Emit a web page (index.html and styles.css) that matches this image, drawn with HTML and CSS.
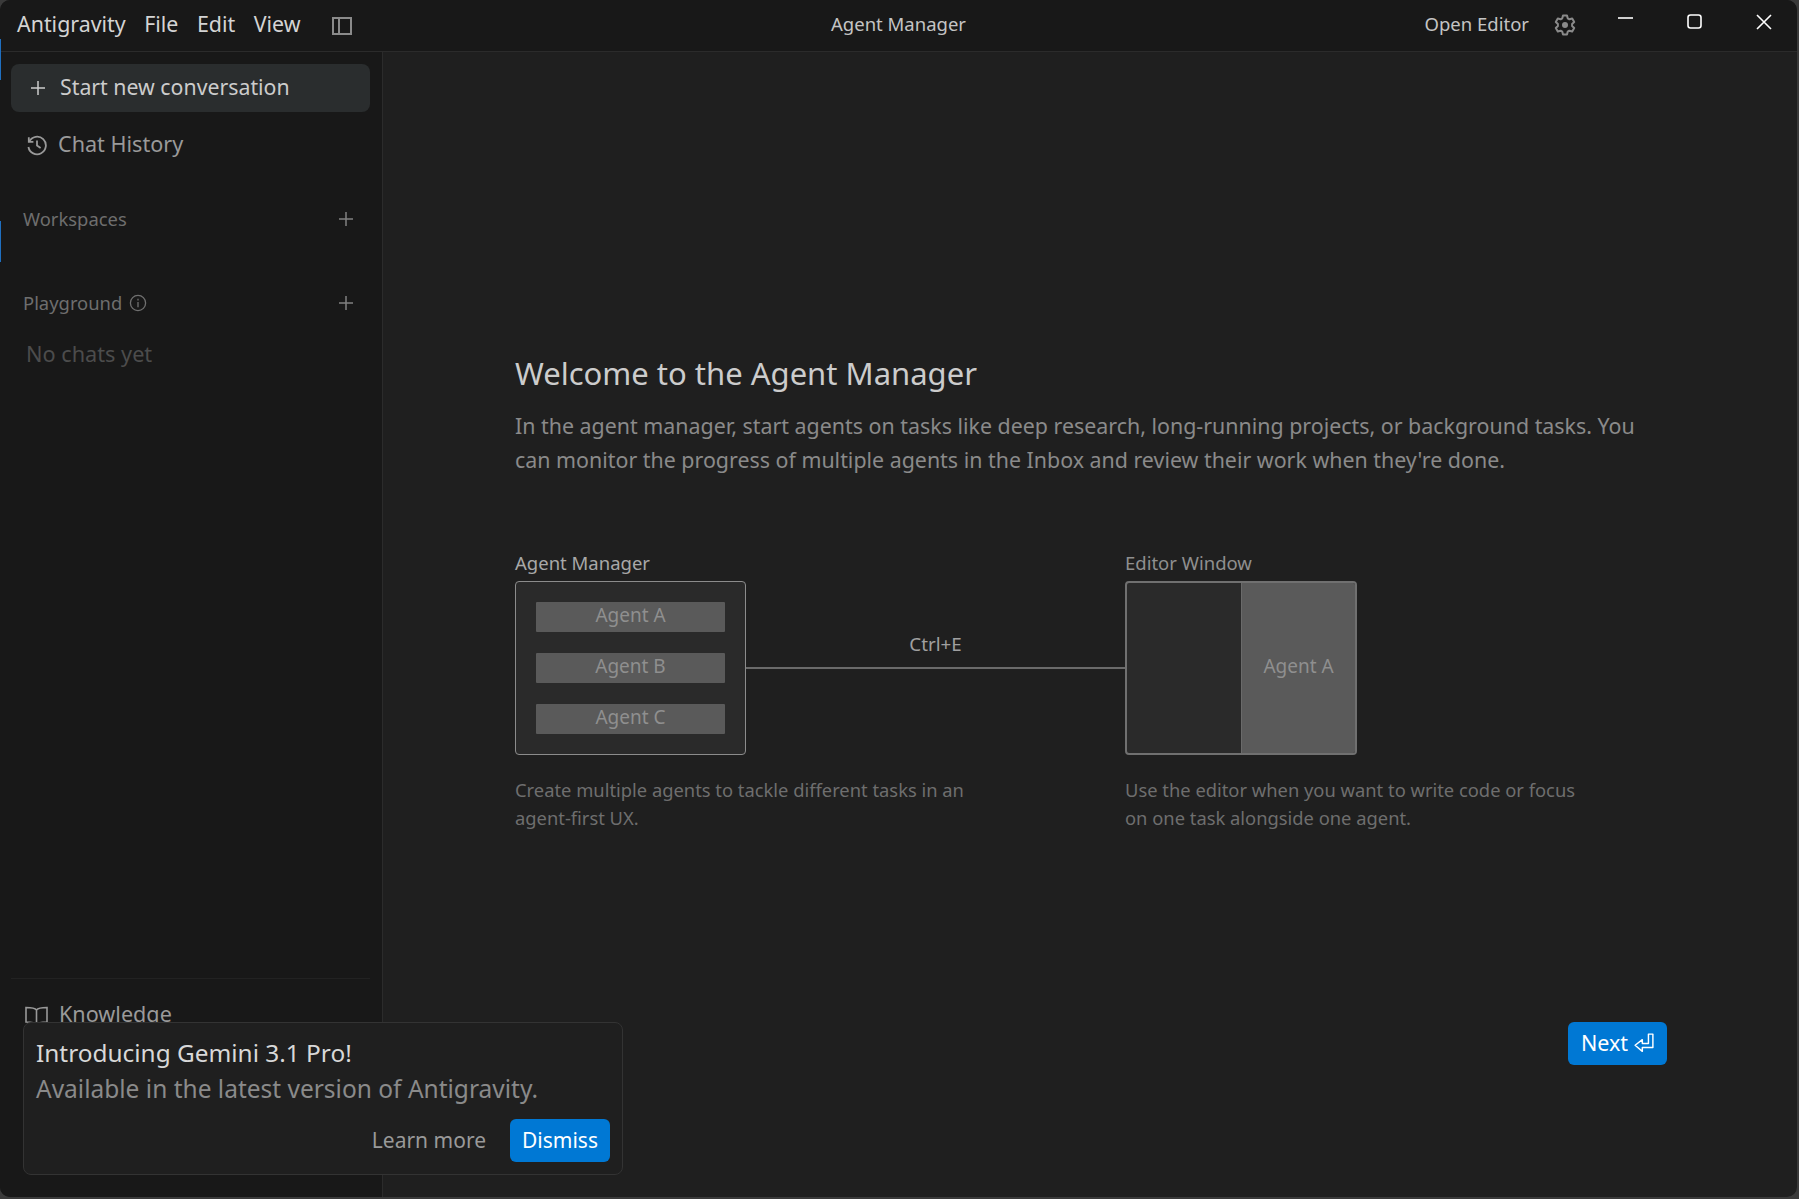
FILE: index.html
```html
<!DOCTYPE html>
<html lang="en">
<head>
<meta charset="utf-8">
<title>Agent Manager</title>
<link rel="stylesheet" href="styles.css">
</head>
<body>
<div class="window">
  <header class="titlebar">
    <div class="tb-left">
      <span class="menu">Antigravity</span>
      <span class="menu">File</span>
      <span class="menu">Edit</span>
      <span class="menu">View</span>
      <svg class="tb-layout" width="20" height="18" viewBox="0 0 20 18" fill="none" stroke="#8a8a8a" stroke-width="2"><rect x="1" y="1" width="18" height="16"/><path d="M7 1v16"/></svg>
    </div>
    <div class="tb-title">Agent Manager</div>
    <div class="tb-right">
      <span class="open-editor">Open Editor</span>
      <svg class="gear" width="24" height="24" viewBox="0 0 24 24" fill="none" stroke="#8a8a8a" stroke-width="2" stroke-linejoin="round"><path d="M10 2.500h4l.7 2.800 1.700 1 2.800-.8 2 3.500-2.100 2v2l2.100 2-2 3.500-2.800-.8-1.700 1-.7 2.800h-4l-.7-2.800-1.700-1-2.800.8-2-3.500 2.100-2v-2l-2.100-2 2-3.500 2.800.8 1.700-1z"/><circle cx="12" cy="12" r="3" fill="#8a8a8a" stroke="none"/></svg>
      <div class="winctl">
        <svg width="16" height="16" viewBox="0 0 16 16" stroke="#fff" stroke-width="1.6" fill="none"><path d="M0 4h15"/></svg>
        <svg width="16" height="16" viewBox="0 0 16 16" stroke="#fff" stroke-width="1.6" fill="none"><rect x="1" y="1" width="13" height="13" rx="2.500"/></svg>
        <svg width="16" height="16" viewBox="0 0 16 16" stroke="#fff" stroke-width="1.6" fill="none"><path d="M1 1l14 14M15 1L1 15"/></svg>
      </div>
    </div>
  </header>
  <div class="body">
    <aside class="sidebar">
      <div class="new-conv">
        <svg width="16" height="16" viewBox="0 0 16 16" stroke="#cccccc" stroke-width="1.5"><path d="M8 1v14M1 8h14"/></svg>
        <span>Start new conversation</span>
      </div>
      <div class="nav-item history">
        <svg width="22" height="22" viewBox="0 0 22 22" fill="none" stroke="#999" stroke-width="1.8"><path d="M3.200 7.500A8.800 8.800 0 1 1 2.400 13"/><path d="M2.800 3.200v4.600h4.600"/><path d="M11 6.500V11.500l3.600 2.600"/></svg>
        <span>Chat History</span>
      </div>
      <div class="section workspaces">
        <span class="sec-text">Workspaces</span>
        <svg class="plus" width="16" height="16" viewBox="0 0 16 16" stroke="#808080" stroke-width="1.5"><path d="M8 1v14M1 8h14"/></svg>
      </div>
      <div class="section playground">
        <span class="pg-label"><span class="sec-text">Playground</span>
          <svg width="18" height="18" viewBox="0 0 18 18" fill="none" stroke="#707070" stroke-width="1.3"><circle cx="9" cy="9" r="7.600"/><path d="M9 8v5.200M9 4.800v1.600"/></svg>
        </span>
        <svg class="plus" width="16" height="16" viewBox="0 0 16 16" stroke="#808080" stroke-width="1.5"><path d="M8 1v14M1 8h14"/></svg>
      </div>
      <div class="empty">No chats yet</div>
      <div class="side-foot">
        <div class="nav-item knowledge">
          <svg width="25" height="20" viewBox="0 0 25 20" fill="none" stroke="#999" stroke-width="1.6"><path d="M12.500 4C11 2 8 1.500 2 1.500V16c6 0 9 .5 10.500 2.500C14 16.500 17 16 23 16V1.500C17 1.500 14 2 12.500 4zM12.500 4v14.500"/></svg>
          <span>Knowledge</span>
        </div>
      </div>
    </aside>
    <main class="main">
      <h1 class="heading">Welcome to the Agent Manager</h1>
      <p class="lead">In the agent manager, start agents on tasks like deep research, long-running projects, or background tasks. You can monitor the progress of multiple agents in the Inbox and review their work when they're done.</p>
      <div class="diagram">
        <div class="col">
          <div class="label">Agent Manager</div>
          <div class="box mgr">
            <div class="agent">Agent A</div>
            <div class="agent">Agent B</div>
            <div class="agent">Agent C</div>
          </div>
        </div>
        <div class="link"><span class="shortcut">Ctrl+E</span></div>
        <div class="col">
          <div class="label dim">Editor Window</div>
          <div class="box editor"><div class="editor-left"></div><div class="editor-right">Agent A</div></div>
        </div>
      </div>
      <div class="captions">
        <p>Create multiple agents to tackle different tasks in an agent-first UX.</p>
        <p>Use the editor when you want to write code or focus on one task alongside one agent.</p>
      </div>
      <div class="next-row">
        <div class="next">Next
          <svg width="20" height="20" viewBox="0 0 18 18" fill="none" stroke="#fff" stroke-width="1.300" stroke-linejoin="round"><path d="M17 1h-4v8.500H7.500V6L1 11l6.500 5.500V13H17z"/></svg>
        </div>
      </div>
    </main>
  </div>
  <div class="toast">
    <div class="toast-title">Introducing Gemini 3.1 Pro!</div>
    <div class="toast-sub">Available in the latest version of Antigravity.</div>
    <div class="toast-actions">
      <span class="learn">Learn more</span>
      <span class="dismiss">Dismiss</span>
    </div>
  </div>
  <span class="peek peek-a"></span>
  <span class="peek peek-b"></span>
</div>
</body>
</html>
```
FILE: styles.css
```css
* { box-sizing: border-box; }
html, body { margin: 0; height: 100%; background: #3a3a3a; overflow: hidden; }
body { font-family: "Noto Sans", "Open Sans", sans-serif; padding: 0 2px 2px 0; }
.window {
  position: relative; height: 1197px; width: 1797px;
  background: #1f1f1f; border-radius: 10px; overflow: hidden;
  display: flex; flex-direction: column;
}
.peek { position: absolute; left: 0; width: 1px; height: 41px; background: #1f6fc0; }
.peek-a { top: 39px; }
.peek-b { top: 221px; }
.titlebar {
  height: 52px; flex: none; background: #181818; border-bottom: 1px solid #2b2b2b;
  display: grid; grid-template-columns: 1fr auto 1fr; align-items: center; color: #cccccc;
}
.tb-left { display: flex; align-items: center; padding: 0 0 5px 17px; gap: 18.500px; font-size: 21.400px; color: #d4d4d4; }
.tb-layout { margin: 5px 0 0 13px; }
.tb-title { font-size: 18.500px; color: #c4c4c4; padding-bottom: 5px; }
.tb-right { display: flex; align-items: center; justify-content: flex-end; }
.open-editor { font-size: 18.500px; color: #c4c4c4; padding-bottom: 5px; }
.gear { margin: 0 -1px 2px 24px; }
.winctl { display: flex; gap: 53px; margin: 0 25px 8px 42px; }
.body { flex: 1; display: flex; min-height: 0; }
.sidebar { width: 383px; flex: none; background: #181818; border-right: 1px solid #2b2b2b; display: flex; flex-direction: column; padding: 12px 12px 0 11px; }
.new-conv { height: 48px; background: #2a2d2e; border-radius: 8px; display: flex; align-items: center; gap: 14px; padding: 0 0 3px 19px; color: #cccccc; font-size: 21.300px; }
.new-conv svg { margin-top: 3px; }
.nav-item { display: flex; align-items: center; gap: 10px; color: #9a9a9a; font-size: 21.600px; }
.nav-item span { position: relative; top: -2px; }
.history { margin: 19px 0 0 15px; height: 28px; }
.section { display: flex; align-items: center; justify-content: space-between; padding: 0 16px 0 12px; color: #6e6e6e; font-size: 18.400px; height: 26px; }
.sec-text { position: relative; top: -1px; }
.workspaces { margin-top: 47px; }
.playground { margin-top: 58px; }
.pg-label { display: flex; align-items: center; gap: 7px; }
.empty { margin: 24px 0 0 15px; color: #4c4c4c; font-size: 21.700px; line-height: 28px; }
.side-foot { margin-top: auto; height: 219px; border-top: 1px solid #222222; padding: 22px 0 0 13px; }
.main { flex: 1; padding: 299px 0 0 132px; position: relative; min-width: 0; display: flex; flex-direction: column; }
.heading { margin: 0; font-size: 31px; font-weight: 400; color: #cccccc; line-height: 44px; }
.lead { margin: 14px 0 0; width: 1125px; font-size: 21.400px; line-height: 34px; color: #8a8a8a; }
.diagram { display: flex; align-items: flex-end; margin-top: 72px; }
.col { width: 231px; flex: none; }
.col:last-child { width: 232px; }
.label { font-size: 18.500px; color: #a8a8a8; line-height: 28px; white-space: nowrap; }
.label.dim { color: #8f8f8f; }
.box { height: 174px; border-radius: 4px; background: #2a2a2a; margin-top: 4px; }
.mgr { border: 1px solid #8c8c8c; padding: 20px 20px 0; display: flex; flex-direction: column; gap: 21px; }
.agent { height: 30px; background: #5a5a5a; border-radius: 1px; color: #8f8f8f; font-size: 19px; line-height: 26px; text-align: center; }
.link { width: 379px; flex: none; height: 2px; background: #6a6a6a; margin-bottom: 86px; position: relative; }
.shortcut { position: absolute; left: 0; right: 0; bottom: 12px; text-align: center; font-size: 18.800px; color: #a0a0a0; line-height: 26px; }
.editor { border: 2px solid #707070; display: flex; overflow: hidden; }
.editor-left { width: 114px; }
.editor-right { flex: 1; background: #5a5a5a; border-left: 1px solid #6a6a6a; color: #8f8f8f; font-size: 19px; display: flex; align-items: center; justify-content: center; padding-bottom: 5px; }
.captions { display: flex; gap: 149px; margin-top: 21px; }
.captions p { margin: 0; width: 461px; font-size: 18.350px; line-height: 28px; color: #6e6e6e; }
.next-row { position: absolute; left: 1185px; top: 970px; }
.next { width: 99px; height: 43px; background: #0078d4; border-radius: 6px; color: #fff; font-size: 21.500px; display: flex; align-items: center; justify-content: center; gap: 6px; padding-bottom: 2px; }
.next svg { margin-top: 1px; }
.toast { position: absolute; left: 23px; top: 1022px; width: 600px; height: 153px; background: #1f1f1f; border: 1px solid #333333; border-radius: 8px; padding: 12px 12px 0; }
.toast-title { font-size: 24.400px; line-height: 36px; color: #d8d8d8; }
.toast-sub { font-size: 24.500px; line-height: 36px; color: #8a8a8a; }
.toast-actions { display: flex; justify-content: flex-end; align-items: center; gap: 24px; margin-top: 12px; }
.learn { font-size: 21px; color: #999; padding-bottom: 2px; }
.dismiss { width: 100px; height: 43px; background: #0078d4; border-radius: 6px; color: #fff; font-size: 21px; display: flex; align-items: center; justify-content: center; padding-bottom: 2px; }
```
